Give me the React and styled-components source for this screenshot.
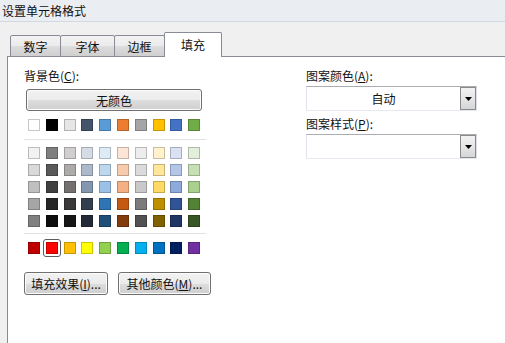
import React from "react";
import styled, { createGlobalStyle } from "styled-components";

const Global = createGlobalStyle`
  html, body { margin: 0; padding: 0; background: #f0f0f0; }
  body { font-family: "Noto Sans CJK SC", "Noto Sans", sans-serif; font-size: 12px; color: #000; }
`;

const Window = styled.div`
  width: 505px;
  height: 343px;
  overflow: hidden;
  display: flex;
  flex-direction: column;
  background: #f0f0f0;
`;

const TitleBar = styled.div`
  height: 21px;
  line-height: 21px;
  padding-left: 2px;
  font-size: 12px;
  background: #eaeef3;
  border-bottom: 1px solid #d3d9e0;
  color: #111;
`;

const Dialog = styled.div`
  flex: 1;
  display: flex;
  flex-direction: column;
  padding: 10px 0 0 7px;
  background: #f0f0f0;
`;

const TabStrip = styled.div`
  display: flex;
  align-items: flex-end;
  padding-left: 3px;
  height: 25px;
  position: relative;
  z-index: 1;
  margin-bottom: -1px;
`;

const Tab = styled.div`
  width: ${(p) => p.$w}px;
  height: ${(p) => (p.$active ? 25 : 22)}px;
  box-sizing: border-box;
  margin-left: ${(p) => (p.$first ? 0 : -1)}px;
  border: 1px solid #898c95;
  border-bottom: ${(p) => (p.$active ? "none" : "1px solid #898c95")};
  border-radius: 2px 2px 0 0;
  background: ${(p) =>
    p.$active ? "#ffffff" : "linear-gradient(#f3f3f3 0%, #ebebeb 50%, #dddddd 51%, #cfcfcf 100%)"};
  display: flex;
  align-items: center;
  justify-content: center;
  padding-bottom: ${(p) => (p.$active ? 2 : 0)}px;
  font-size: 12px;
  color: #111;
`;

const Panel = styled.div`
  flex: 1;
  background: #fff;
  border-top: 1px solid #898c95;
  border-left: 1px solid #898c95;
  display: flex;
  padding: 11px 0 0 16px;
`;

const LeftCol = styled.div`
  width: 190px;
  display: flex;
  flex-direction: column;
`;

const RightCol = styled.div`
  width: 170px;
  margin-left: 92px;
  display: flex;
  flex-direction: column;
`;

const Label = styled.div`
  font-size: 12px;
  line-height: 15px;
  height: 15px;
  white-space: nowrap;
  margin-top: ${(p) => p.$mt || 0}px;
  color: #111;
`;

const WinButton = styled.div`
  box-sizing: border-box;
  height: ${(p) => p.$h}px;
  width: ${(p) => p.$w}px;
  margin-left: ${(p) => p.$ml || 0}px;
  margin-top: ${(p) => p.$mt || 0}px;
  border: 1px solid #707070;
  border-radius: 3px;
  box-shadow: inset 0 0 0 1px #fcfcfc;
  background: linear-gradient(#f2f2f2 0%, #ebebeb 50%, #dddddd 51%, #cfcfcf 100%);
  display: flex;
  align-items: center;
  justify-content: center;
  font-size: 12px;
  color: #111;
  white-space: nowrap;
`;

const SwatchRow = styled.div`
  display: flex;
  gap: 5.8px;
  margin-left: 4px;
  margin-top: ${(p) => p.$mt || 0}px;
`;

const SwatchGrid = styled.div`
  display: grid;
  grid-template-columns: repeat(10, 12px);
  grid-auto-rows: 12px;
  column-gap: 5.8px;
  row-gap: 5px;
  margin-left: 4px;
  margin-top: ${(p) => p.$mt || 0}px;
`;

const Swatch = styled.div`
  width: 12px;
  height: 12px;
  box-sizing: border-box;
  background: ${(p) => p.$c};
  box-shadow: inset 0 0 0 1px rgba(0, 0, 0, 0.22);
  position: relative;
  ${(p) =>
    p.$selected &&
    `
    &::after {
      content: "";
      position: absolute;
      left: -3px; top: -3px; right: -3px; bottom: -3px;
      border: 1px solid #5c5c5c;
      border-radius: 3px;
      box-shadow: inset 0 0 0 1px #ffffff;
    }
  `}
`;

const Separator = styled.div`
  height: 1px;
  width: 182px;
  background: #e2e2e2;
  margin-top: ${(p) => p.$mt || 0}px;
`;

const ButtonRow = styled.div`
  display: flex;
  gap: 10px;
  margin-top: 18px;
`;

const Combo = styled.div`
  box-sizing: border-box;
  height: 25px;
  width: 171px;
  margin-top: 3px;
  border: 1px solid #abadb3;
  border-color: #abadb3 #dbdfe6 #e3e9ef #e2e3ea;
  background: #fff;
  display: flex;
  align-items: stretch;
`;

const ComboText = styled.div`
  flex: 1;
  display: flex;
  align-items: center;
  justify-content: center;
  font-size: 12px;
  color: #111;
`;

const ComboButton = styled.div`
  width: 16px;
  box-sizing: border-box;
  border: 1px solid #8a8a8a;
  background: linear-gradient(#f2f2f2 0%, #e6e6e6 50%, #d6d6d6 100%);
  display: flex;
  align-items: center;
  justify-content: center;
`;

const themeRow = ["#FFFFFF", "#000000", "#E7E6E6", "#44546A", "#5B9BD5", "#ED7D31", "#A5A5A5", "#FFC000", "#4472C4", "#70AD47"];
const tints = [
  ["#F2F2F2", "#7F7F7F", "#D0CECE", "#D6DCE4", "#DDEBF7", "#FCE4D6", "#EDEDED", "#FFF2CC", "#D9E1F2", "#E2EFDA"],
  ["#D9D9D9", "#595959", "#AEAAAA", "#ACB9CA", "#BDD7EE", "#F8CBAD", "#DBDBDB", "#FFE699", "#B4C6E7", "#C6E0B4"],
  ["#BFBFBF", "#404040", "#757171", "#8497B0", "#9BC2E6", "#F4B084", "#C9C9C9", "#FFD966", "#8EA9DB", "#A9D08E"],
  ["#A6A6A6", "#262626", "#3A3838", "#333F4F", "#2F75B5", "#C65911", "#7B7B7B", "#BF8F00", "#305496", "#548235"],
  ["#808080", "#0D0D0D", "#161616", "#222B35", "#1F4E78", "#833C0C", "#525252", "#806000", "#203764", "#375623"],
];
const standard = ["#C00000", "#FF0000", "#FFC000", "#FFFF00", "#92D050", "#00B050", "#00B0F0", "#0070C0", "#002060", "#7030A0"];

const tabs = [
  { label: "数字", w: 51 },
  { label: "字体", w: 55 },
  { label: "边框", w: 51 },
  { label: "填充", w: 58, active: true },
];

const Arrow = () => (
  <svg width="7" height="4" viewBox="0 0 7 4">
    <path d="M0 0 H7 L3.5 4 Z" fill="#000" />
  </svg>
);

export default function App() {
  return (
    <>
      <Global />
      <Window>
        <TitleBar>设置单元格格式</TitleBar>
        <Dialog>
          <TabStrip>
            {tabs.map((t, i) => (
              <Tab key={t.label} $w={t.w} $active={t.active} $first={i === 0}>
                {t.label}
              </Tab>
            ))}
          </TabStrip>
          <Panel>
            <LeftCol>
              <Label>
                背景色(<u>C</u>):
              </Label>
              <WinButton $w={176} $h={22} $ml={2} $mt={6}>
                无颜色
              </WinButton>
              <SwatchRow $mt={8}>
                {themeRow.map((c, i) => (
                  <Swatch key={i} $c={c} />
                ))}
              </SwatchRow>
              <Separator $mt={8} />
              <SwatchGrid $mt={7}>
                {tints.flat().map((c, i) => (
                  <Swatch key={i} $c={c} />
                ))}
              </SwatchGrid>
              <Separator $mt={6} />
              <SwatchRow $mt={8}>
                {standard.map((c, i) => (
                  <Swatch key={i} $c={c} $selected={i === 1} />
                ))}
              </SwatchRow>
              <ButtonRow>
                <WinButton $w={84} $h={23}>
                  填充效果(<u>I</u>)...
                </WinButton>
                <WinButton $w={93} $h={23}>
                  其他颜色(<u>M</u>)...
                </WinButton>
              </ButtonRow>
            </LeftCol>
            <RightCol>
              <Label>
                图案颜色(<u>A</u>):
              </Label>
              <Combo>
                <ComboText>自动</ComboText>
                <ComboButton>
                  <Arrow />
                </ComboButton>
              </Combo>
              <Label $mt={5}>
                图案样式(<u>P</u>):
              </Label>
              <Combo>
                <ComboText />
                <ComboButton>
                  <Arrow />
                </ComboButton>
              </Combo>
            </RightCol>
          </Panel>
        </Dialog>
      </Window>
    </>
  );
}
